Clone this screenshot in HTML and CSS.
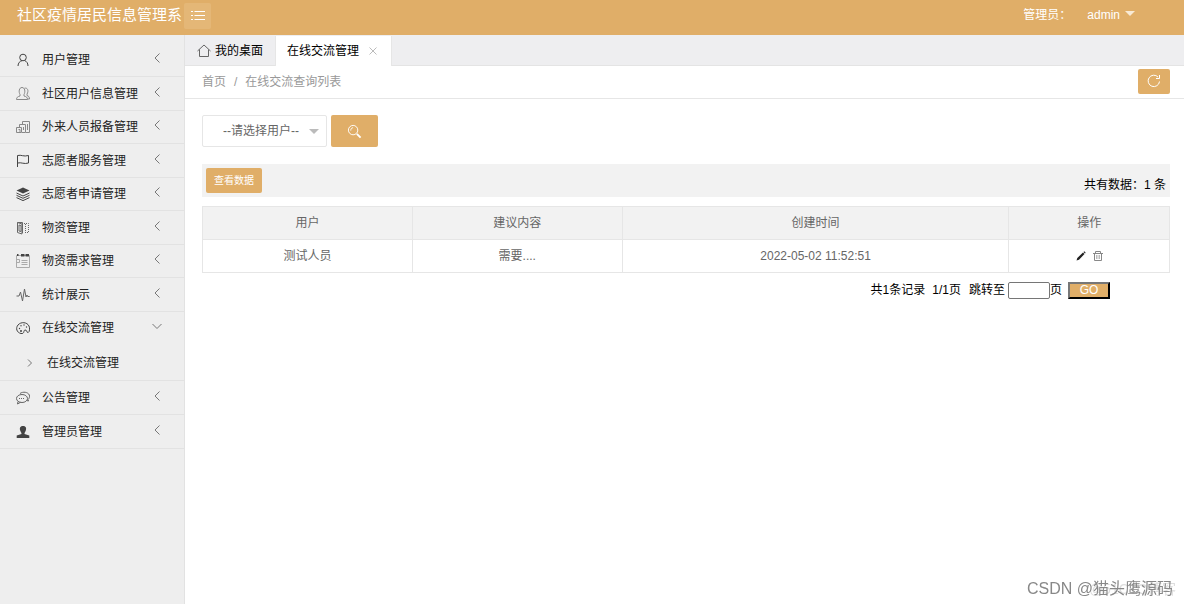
FILE: index.html
```html
<!DOCTYPE html>
<html lang="zh-CN">
<head>
<meta charset="utf-8">
<title>社区疫情居民信息管理系统</title>
<link rel="stylesheet" href="styles.css">
</head>
<body>
<svg class="defs" aria-hidden="true">
  <symbol id="left" viewBox="0 0 12 12"><path d="M8.500 1.500 4 6l4.500 4.500"/></symbol>
  <symbol id="down" viewBox="0 0 12 12"><path d="M1.500 4 6 8.500 10.500 4"/></symbol>
</svg>
<header class="topbar">
  <h1 class="brand">社区疫情居民信息管理系</h1>
  <button class="toggle" aria-label="切换菜单"><svg viewBox="0 0 14 12"><path d="M0 1.500h2M3.500 1.500H14M0 5.500h2M3.500 5.500H14M0 9.500h2M3.500 9.500H14"/></svg></button>
  <div class="account"><span>管理员：</span><a class="user" href="#">admin<span class="caret"></span></a></div>
</header>
<div class="shell">
  <nav class="sidebar">
    <ul class="menu">
      <li><a href="#"><svg class="icon" viewBox="0 0 14 14"><circle cx="7" cy="4.500" r="3.300"/><path d="M2 13c0-3 2-5 4-5.300M8.500 7.500c2 .8 3.500 2.500 3.500 5.500"/></svg><span>用户管理</span><svg class="arrow"><use href="#left"/></svg></a></li>
      <li><a href="#"><svg class="icon soft" viewBox="0 0 14 14"><path d="M.5 12.500h11c0-2-1-2.800-3.500-3.500V7.500C9.500 5 9 .5 6 .5S2.500 5 4 7.500V9C1.500 9.700.5 10.500.5 12.500zM8.500 1.200c3-.7 4.500 2.300 2.500 6v1.300c1.800.7 2.500 1.500 2.500 3.500h-2"/></svg><span>社区用户信息管理</span><svg class="arrow"><use href="#left"/></svg></a></li>
      <li><a href="#"><svg class="icon soft" viewBox="0 0 14 14"><path d="M.5 7.500h5v5h-5zM2.500 9.500h1.500v3M3.500 7V4.500h6v8H6M6.500 4V1.500h7v11h-3.500M11.500 4v6M7.500 7v3"/></svg><span>外来人员报备管理</span><svg class="arrow"><use href="#left"/></svg></a></li>
      <li><a href="#"><svg class="icon" viewBox="0 0 14 14"><path d="M1.500 13V1.500c4-1 6 1.500 11 0v7.500c-4.500 1.500-7-1-11 0"/></svg><span>志愿者服务管理</span><svg class="arrow"><use href="#left"/></svg></a></li>
      <li><a href="#"><svg class="icon" viewBox="0 0 14 14"><path class="solid" d="M7 .5l6.500 3L7 6.500.5 3.500z"/><path d="M.5 6 7 9l6.500-3M.5 8.300l6.500 3 6.500-3M.5 10.600l6.500 3 6.500-3"/></svg><span>志愿者申请管理</span><svg class="arrow"><use href="#left"/></svg></a></li>
      <li><a href="#"><svg class="icon thin" viewBox="0 0 14 14"><path d="M1.500 1.500v10l4.500 1.500V3zM3 4l2 .5v6L3 10zM1.500 1.500h5v10.500"/><path class="dots" d="M8 2.500h4.500v9H8M9.500 3v9"/></svg><span>物资管理</span><svg class="arrow"><use href="#left"/></svg></a></li>
      <li><a href="#"><svg class="icon" viewBox="0 0 14 14"><path class="pale" d="M.5 1.500h13v12H.5zM5.500 6.500h6M5.500 8.500h6M5.500 10.500h6M1 5.500h2.500v3H1"/><path class="solid" d="M1 0h1.500v2H1zM5 0h3.500v2.500H5zM9.500 0H13v2.500H9.500z"/></svg><span>物资需求管理</span><svg class="arrow"><use href="#left"/></svg></a></li>
      <li><a href="#"><svg class="icon thin" viewBox="0 0 14 14"><path d="M.5 8h2.500L4.500 4l2 9L8.500 1l1.500 8 1-2 .7 1.500h2"/></svg><span>统计展示</span><svg class="arrow"><use href="#left"/></svg></a></li>
      <li class="open"><a href="#"><svg class="icon" viewBox="0 0 14 14"><path d="M5 12.500C.5 11.500-.5 7 2 4c3-3.500 9-3 11 1 1 2 .7 6-.8 6.500C10.500 12 11 8.500 9 9c-2 .5 0 4-4 3.500z"/><g class="solid"><circle cx="3.500" cy="7.500" r=".7"/><circle cx="5" cy="4.800" r=".7"/><circle cx="8" cy="4" r=".7"/><circle cx="10.500" cy="6" r=".7"/><circle cx="5" cy="10" r="1"/></g></svg><span>在线交流管理</span><svg class="arrow"><use href="#down"/></svg></a>
        <ul class="submenu"><li><a href="#"><svg class="bullet" viewBox="0 0 8 8"><path d="M2 .5 5.500 4 2 7.500"/></svg><span>在线交流管理</span></a></li></ul></li>
      <li><a href="#"><svg class="icon thin" viewBox="0 0 14 14"><ellipse cx="6" cy="7.500" rx="5.500" ry="4"/><path d="M2 10.500 1.500 13l3-1.700M4 2.500C7 .3 12 1 13.300 4c.7 1.500 0 3.500-1.300 4.500l.5 1.500-2-.5"/><path class="dots" d="M3 7.500h6"/></svg><span>公告管理</span><svg class="arrow"><use href="#left"/></svg></a></li>
      <li><a href="#"><svg class="icon" viewBox="0 0 14 14"><path class="solid" d="M7 1C3.700 1 3.500 3.500 4.200 5.500 4.700 7 5.500 7.300 5.500 9L.7 10.500V13h12.600v-2.500L8.500 9c0-1.700.8-2 1.300-3.500C10.500 3.500 10.300 1 7 1z"/></svg><span>管理员管理</span><svg class="arrow"><use href="#left"/></svg></a></li>
    </ul>
  </nav>
  <main class="content">
    <div class="tabs">
      <a class="tab" href="#"><svg class="home" viewBox="0 0 14 14"><path d="M.5 7 7 1l6.500 6M2.500 5.500v7h9v-7"/></svg>我的桌面</a>
      <a class="tab current" href="#">在线交流管理<svg class="close" viewBox="0 0 8 8"><path d="M.5.5l7 7M7.500.5l-7 7"/></svg></a>
    </div>
    <div class="crumbs">
      <span>首页</span><span>/</span><span>在线交流查询列表</span>
      <button class="btn refresh" aria-label="刷新"><svg viewBox="0 0 14 14"><path d="M12.500 7.500A5.700 5.700 0 1 1 11 3M12.500 1v3.500H9"/></svg></button>
    </div>
    <div class="page">
      <form class="search">
        <span class="picker"><select aria-label="用户"><option>--请选择用户--</option></select><span class="caret"></span></span>
        <button type="button" class="btn find" aria-label="搜索"><svg viewBox="0 0 16 16"><circle cx="6.500" cy="6.500" r="5"/><path d="M4 7c0-2 1-3 2.500-3"/><path class="handle" d="M10.500 10.500l4 4"/></svg></button>
      </form>
      <div class="toolbar"><button class="btn view">查看数据</button><span class="total">共有数据：1 条</span></div>
      <table class="grid">
        <colgroup><col class="c1"><col class="c1"><col class="c2"><col></colgroup>
        <thead><tr><th>用户</th><th>建议内容</th><th>创建时间</th><th>操作</th></tr></thead>
        <tbody><tr><td>测试人员</td><td>需要....</td><td>2022-05-02 11:52:51</td><td><div class="actions">
          <button aria-label="编辑"><svg viewBox="0 0 10 10"><path class="solid" d="M.5 9.500l.8-2.500L7 1.500l1.500 1.500L3 8.700zM7.500 1l.8-.7 1.400 1.400-.7.8z"/></svg></button>
          <button aria-label="删除"><svg viewBox="0 0 10 10"><path d="M0 2.500h10M2.500 2V.5h5V2M1.500 2.500v7h7v-7"/><path class="faint" d="M3.500 4v4M5 4v4M6.500 4v4"/></svg></button></div></td></tr></tbody>
      </table>
      <form class="pager"><span>共1条记录</span><span>1/1页</span><label for="jump">跳转至</label><input id="jump" type="text"><span class="unit">页</span><button type="button" class="go">GO</button></form>
    </div>
  </main>
</div>
<div class="watermark"><span class="under">@51CTO博客</span><span>CSDN @猫头鹰源码</span></div>
</body>
</html>
```
FILE: styles.css
```css
* { box-sizing: border-box; }
body {
  margin: 0;
  min-height: 100vh;
  display: flex;
  flex-direction: column;
  font: 12px/20px "Liberation Sans", "Noto Sans CJK SC", sans-serif;
  color: #222;
  background: #fff;
}
a { color: inherit; text-decoration: none; }
ul { list-style: none; margin: 0; padding: 0; }
button, input, select { font: inherit; }
svg { fill: none; stroke: currentColor; flex: none; }
.defs { display: none; }
.solid { fill: currentColor; stroke: none; }

.topbar {
  display: flex;
  align-items: flex-start;
  height: 35px;
  color: #fff;
  background: #e0ae68;
}
.brand {
  flex: none;
  width: 184px;
  margin: 0;
  padding-left: 17px;
  overflow: hidden;
  white-space: nowrap;
  font-size: 15px;
  font-weight: 400;
  line-height: 30px;
}
.toggle {
  display: grid;
  place-items: center;
  width: 27px;
  height: 26px;
  margin-top: 3px;
  padding: 0;
  border: 0;
  border-radius: 2px;
  color: #fff;
  background: #e4b777;
}
.toggle svg { width: 14px; height: 12px; }
.account { display: flex; gap: 16px; margin-left: auto; padding-right: 49px; line-height: 30px; }
.user { display: flex; gap: 5px; }
.caret {
  width: 0;
  height: 0;
  border: 5px solid transparent;
  border-top-color: currentColor;
  border-bottom: 0;
}
.user .caret { margin-top: 11px; color: #f8ead5; }

.shell { display: flex; flex: 1; }
.sidebar {
  flex: none;
  width: 185px;
  padding-top: 9px;
  border-right: 1px solid #e2e2e2;
  background: #eee;
}
.menu > li { border-bottom: 1px solid #e2e2e2; }
.menu > li > a { display: flex; align-items: center; height: 33px; padding: 0 21px 0 16px; }
.menu > li:nth-child(odd) > a { height: 32px; }
.menu > .open > a, .menu > .open ~ li > a { height: 33px; }
.icon { width: 14px; height: 14px; margin-right: 12px; color: #444; }
.soft { color: #888; }
.thin { color: #666; }
.pale { stroke: #aaa; }
.dots { stroke-dasharray: 1 1; }
.arrow { width: 12px; height: 12px; margin: 0 0 4px auto; color: #777; }
.submenu a { display: flex; align-items: center; gap: 13px; height: 36px; padding: 1px 0 0 26px; }
.bullet { width: 8px; height: 8px; color: #777; }

.content { flex: 1; min-width: 0; }
.tabs { display: flex; height: 31px; padding-top: 1px; border-bottom: 1px solid #e4e4e4; background: #eeeef0; color: #000; }
.tab { display: flex; align-items: center; height: 29px; padding: 0 12px; }
.tab.current { height: 30px; padding: 0 14px 0 11px; background: #fff; border: 1px solid #e6e6e6; border-width: 0 1px; }
.home { width: 14px; height: 14px; margin-right: 4px; color: #666; }
.close { width: 8px; height: 8px; margin-left: 10px; color: #bbb; }
.crumbs { display: flex; align-items: center; gap: 8px; height: 33px; padding: 0 14px 0 17px; border-bottom: 1px solid #e6e6e6; color: #999; }
.btn { display: grid; place-items: center; padding: 0; border: 0; border-radius: 2px; background: #e0ae68; color: #fff; }
.refresh { width: 32px; height: 25px; margin: 0 0 2px auto; }
.refresh svg { width: 14px; height: 14px; }

.page { padding: 16px 14px 0 17px; }
.search { display: flex; gap: 4px; }
.picker { position: relative; width: 125px; }
.picker select { appearance: none; width: 100%; height: 32px; padding: 0 0 0 20px; border: 1px solid #e6e6e6; border-radius: 2px; background: #fff; color: #666; }
.picker .caret { position: absolute; top: 14px; right: 8px; color: #bbb; pointer-events: none; }
.find { width: 47px; height: 32px; }
.find svg { width: 15px; height: 15px; }
.handle { stroke-width: 2; }
.toolbar { display: flex; justify-content: space-between; align-items: flex-start; height: 33px; margin-top: 17px; padding: 4px; background: #f2f2f2; color: #000; }
.view { height: 25px; padding: 0 8px; font-size: 10px; }
.total { padding-top: 7px; }
.grid { width: 100%; margin-top: 9px; border-collapse: collapse; table-layout: fixed; text-align: center; color: #666; }
.c1 { width: 21.7%; }
.c2 { width: 40%; }
.grid th, .grid td { height: 33px; padding: 0; border: 1px solid #e6e6e6; font-weight: 400; }
.grid thead { background: #f2f2f2; }
.actions { display: flex; justify-content: center; gap: 7px; padding-left: 1px; }
.actions button { display: grid; padding: 0; border: 0; background: none; color: #888; }
.actions button:first-child { color: #222; }
.actions svg { width: 10px; height: 10px; }
.faint { stroke: #bbb; }
.pager { display: flex; justify-content: flex-end; align-items: center; margin-top: 7px; padding-right: 60px; color: #000; }
.pager label { margin: 0 3px 0 8px; }
.pager span + span { margin-left: 7px; }
.pager input { width: 42px; height: 17px; padding: 0 2px; border: 1px solid #767676; border-radius: 2px; }
.go { width: 42px; height: 17px; margin-left: 6px; padding: 0; border: 2px outset #555; border-color: #777 #222 #222 #777; background: #e0ae68; color: #fff; line-height: 13px; }
.watermark { position: fixed; right: 11px; bottom: 3px; font-size: 16px; line-height: 24px; color: #888; }
.under { position: absolute; right: -3px; bottom: 0; font-size: 14px; white-space: nowrap; color: #ddd; z-index: -1; }
```
